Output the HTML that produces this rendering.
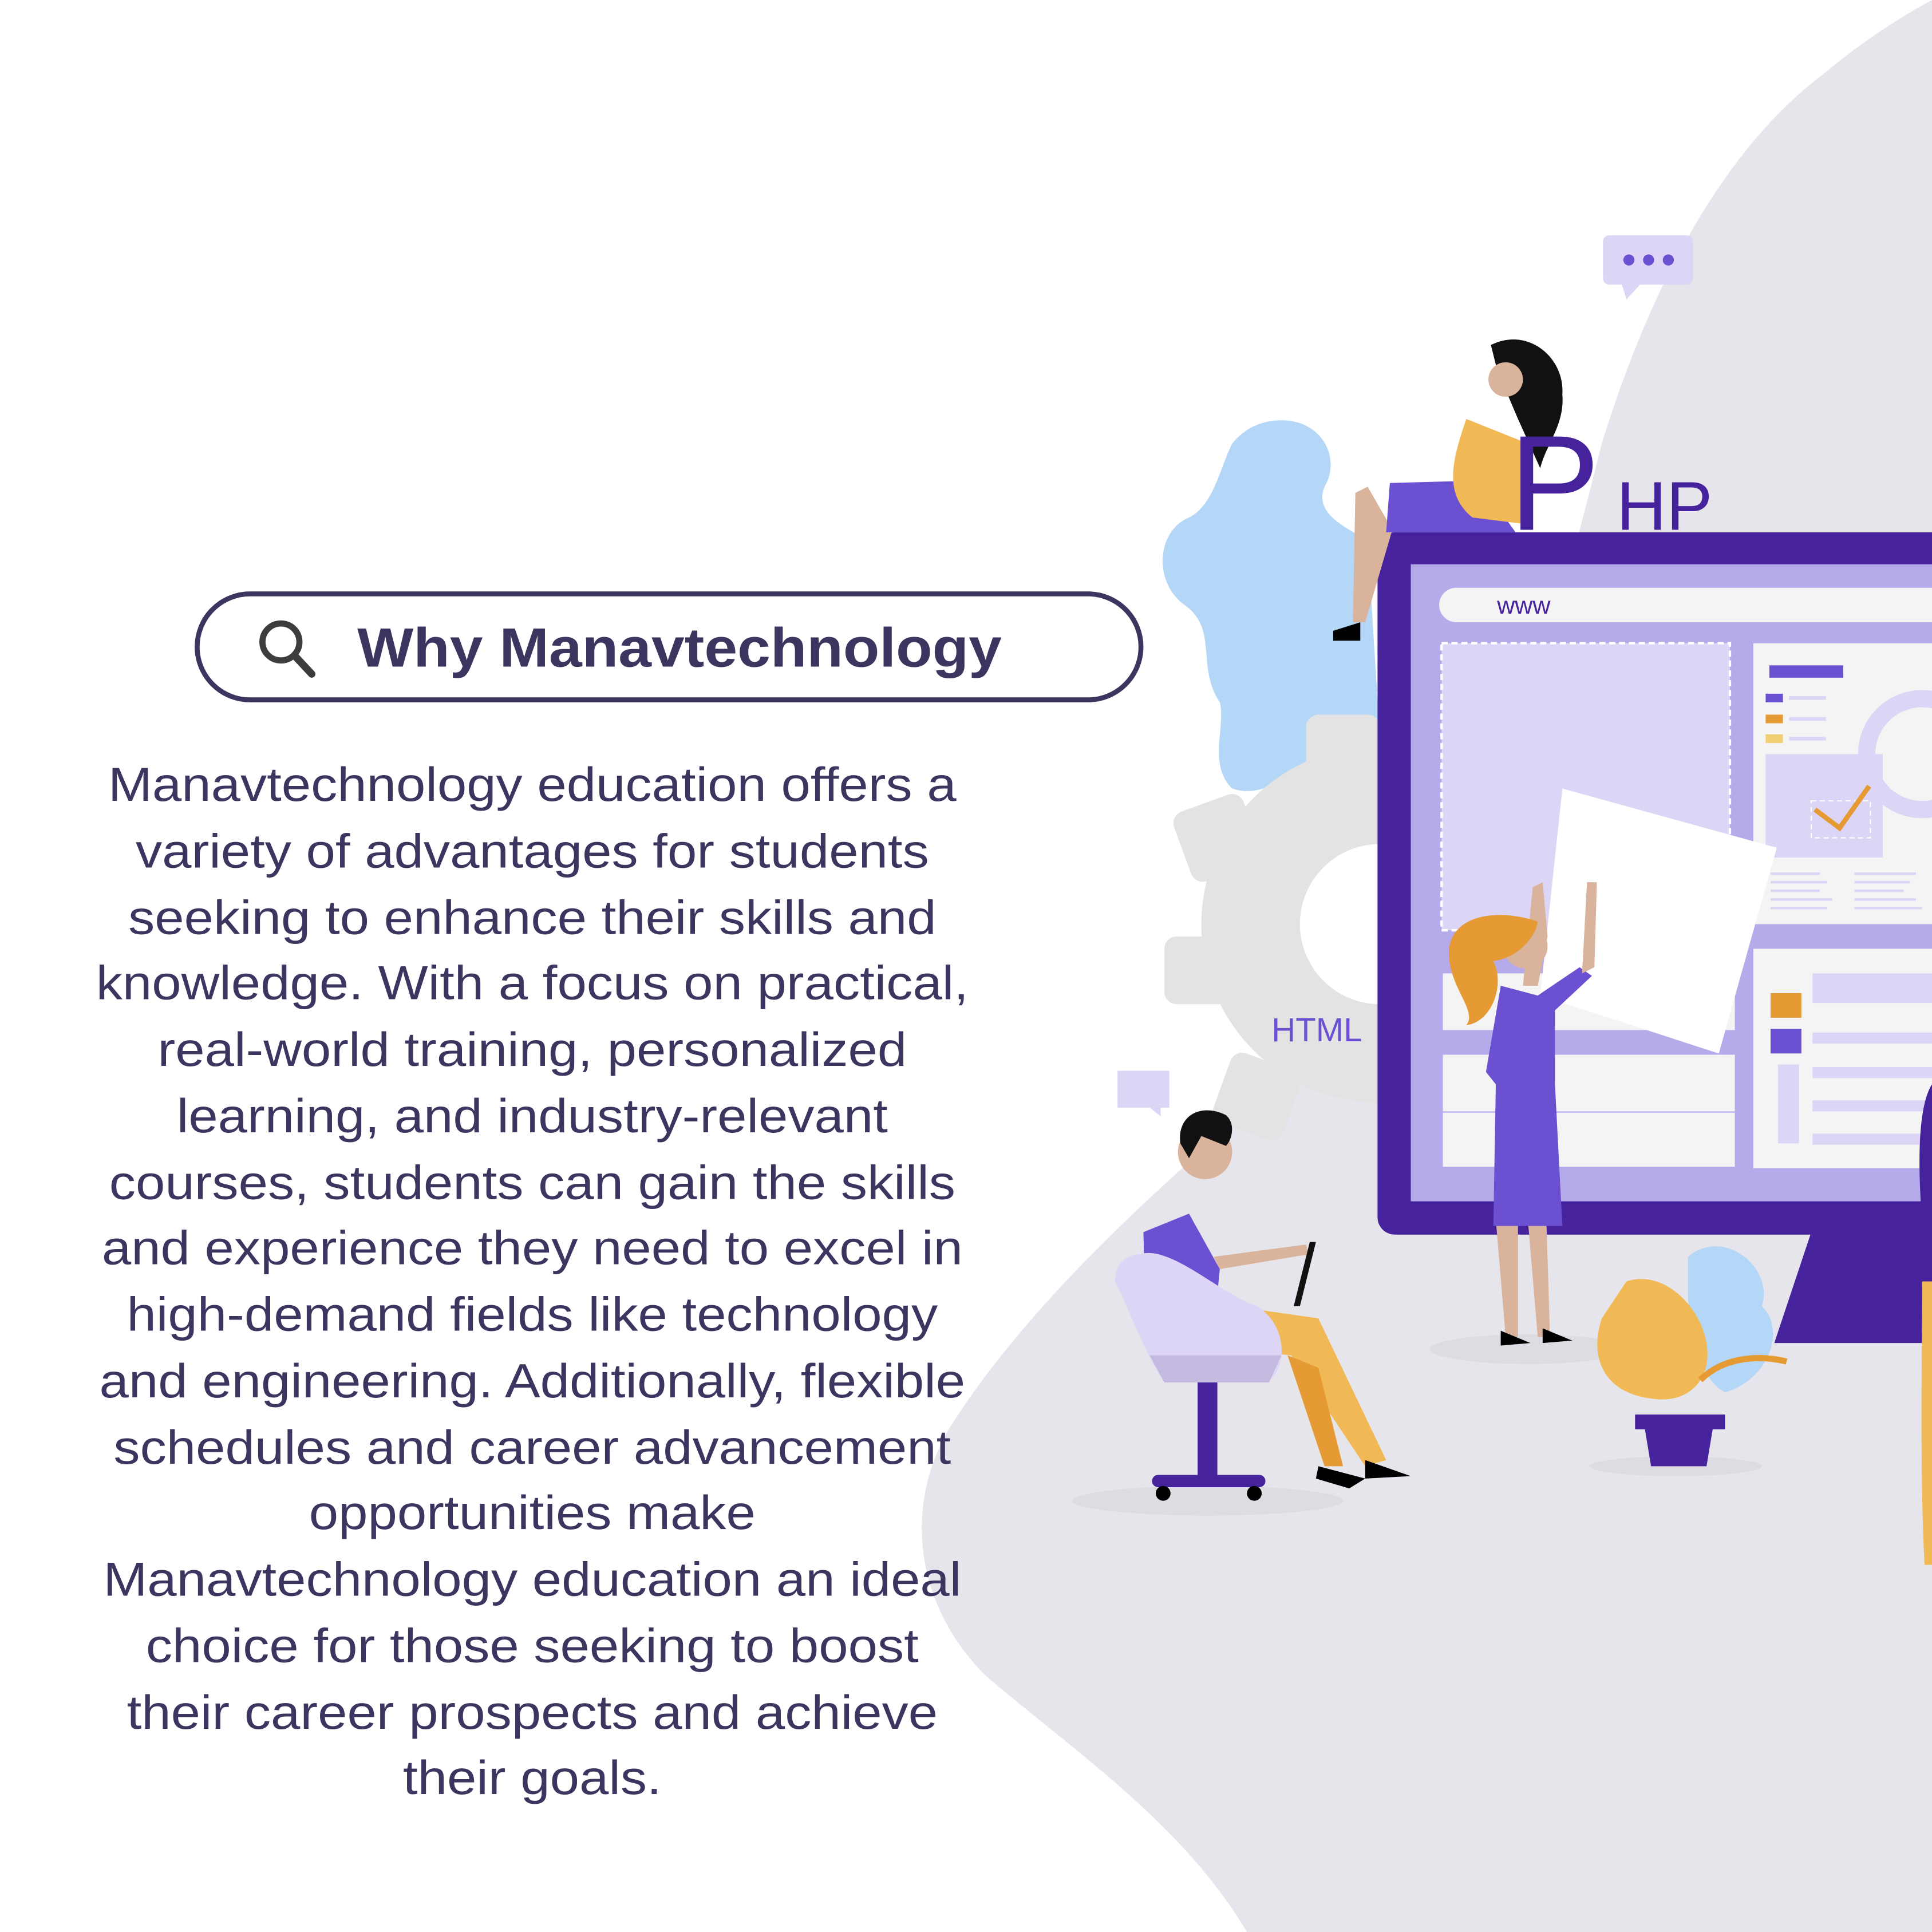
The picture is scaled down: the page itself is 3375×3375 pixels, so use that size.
<!DOCTYPE html>
<html><head><meta charset="utf-8"><style>
html,body{margin:0;padding:0;background:#fff;}
svg{display:block;}
</style></head><body>
<svg width="3375" height="3375" viewBox="0 0 1568 1568" xmlns="http://www.w3.org/2000/svg">
<rect width="1568" height="1568" fill="#fff"/>
<path d="M1568 0 L1568 1568 L1012 1568 C960 1480 870 1420 800 1360 C740 1300 735 1220 770 1160 C820 1080 900 1000 980 930 C1050 870 1100 820 1150 760 C1220 660 1260 520 1300 360 C1340 230 1400 120 1480 60 C1510 35 1540 15 1568 0 Z" fill="#e6e5ec"/>
<path d="M1030 342 C1070 335 1090 370 1075 395 C1065 420 1100 430 1110 440 L1120 600 C1110 610 1095 600 1080 600 C1060 620 1030 650 1000 640 C980 620 995 590 990 570 C970 540 990 510 960 490 C935 470 940 430 965 420 C985 410 990 380 1000 360 C1010 348 1020 344 1030 342 Z" fill="#b4d7f8"/>
<g fill="#e3e3e3">
<circle cx="1120" cy="750" r="145"/>
<rect x="958" y="650" width="60" height="60" rx="10" transform="rotate(-20 988 680)"/>
<rect x="945" y="760" width="60" height="55" rx="10"/>
<rect x="990" y="860" width="60" height="60" rx="10" transform="rotate(20 1020 890)"/>
<rect x="1060" y="580" width="60" height="60" rx="10"/>
</g>
<circle cx="1120" cy="750" r="65" fill="#fff"/>
<text x="1032" y="845" font-family="Liberation Sans, sans-serif" font-size="27" fill="#6b51d1">HTML</text>
<rect x="1301" y="191" width="73" height="40" rx="5" fill="#ddd5f5"/>
<path d="M1316 230 L1320 243 L1332 230 Z" fill="#ddd5f5"/>
<circle cx="1322" cy="211" r="4.5" fill="#6b51d1"/><circle cx="1338" cy="211" r="4.5" fill="#6b51d1"/><circle cx="1354" cy="211" r="4.5" fill="#6b51d1"/>
<rect x="907" y="869" width="42" height="30" fill="#ddd5f5"/>
<path d="M932 898 L942 906 L942 898 Z" fill="#ddd5f5"/>
<path d="M1470 1000 L1568 1000 L1568 1090 L1440 1090 Z" fill="#46239c"/>
<rect x="1118" y="432" width="480" height="570" rx="14" fill="#46239c"/>
<rect x="1145" y="458" width="430" height="517" fill="#b5abea"/>
<rect x="1168" y="477" width="420" height="28" rx="14" fill="#f4f4f4"/>
<text x="1215" y="498" font-family="Liberation Sans, sans-serif" font-size="20" fill="#46239c">www</text>
<rect x="1170" y="522" width="234" height="233" fill="#ddd5f5" stroke="#fff" stroke-width="2" stroke-dasharray="5 3"/>
<rect x="1423" y="522" width="160" height="228" fill="#f4f4f4"/>
<rect x="1436" y="540" width="60" height="10" fill="#6b51d1"/>
<rect x="1433" y="563" width="14" height="7" fill="#6b51d1"/><rect x="1452" y="565" width="30" height="3" fill="#ddd5f5"/>
<rect x="1433" y="580" width="14" height="7" fill="#e59a33"/><rect x="1452" y="582" width="30" height="3" fill="#ddd5f5"/>
<rect x="1433" y="596" width="14" height="7" fill="#f0cf72"/><rect x="1452" y="598" width="30" height="3" fill="#ddd5f5"/>
<rect x="1433" y="612" width="95" height="84" fill="#ddd5f5"/>
<circle cx="1560" cy="612" r="45" fill="none" stroke="#ddd5f5" stroke-width="14"/>
<rect x="1470" y="650" width="48" height="30" fill="none" stroke="#fff" stroke-dasharray="4 3"/>
<path d="M1473 657 L1493 672 L1517 638" fill="none" stroke="#e59a33" stroke-width="4"/>
<g fill="#ddd5f5"><rect x="1437" y="708" width="40" height="2"/><rect x="1437" y="715" width="46" height="2"/><rect x="1437" y="722" width="40" height="2"/><rect x="1437" y="729" width="50" height="2"/><rect x="1437" y="736" width="46" height="2"/>
<rect x="1505" y="708" width="50" height="2"/><rect x="1505" y="715" width="45" height="2"/><rect x="1505" y="722" width="40" height="2"/><rect x="1505" y="729" width="50" height="2"/><rect x="1505" y="736" width="55" height="2"/></g>
<rect x="1423" y="770" width="160" height="178" fill="#f4f4f4"/>
<rect x="1471" y="790" width="100" height="24" fill="#ddd5f5"/>
<rect x="1437" y="806" width="25" height="20" fill="#e59a33"/>
<rect x="1437" y="835" width="25" height="20" fill="#6b51d1"/>
<rect x="1443" y="864" width="17" height="64" fill="#ddd5f5"/>
<rect x="1471" y="838" width="100" height="9" fill="#ddd5f5"/><rect x="1471" y="866" width="100" height="9" fill="#ddd5f5"/><rect x="1471" y="893" width="100" height="9" fill="#ddd5f5"/><rect x="1471" y="920" width="100" height="9" fill="#ddd5f5"/>
<rect x="1171" y="790" width="237" height="46" fill="#f4f4f4"/>
<rect x="1171" y="856" width="237" height="46" fill="#f4f4f4"/>
<rect x="1171" y="903" width="237" height="44" fill="#f4f4f4"/>
<path d="M1268 640 L1442 688 L1395 855 L1250 808 Z" fill="#fff"/>
<ellipse cx="1240" cy="1095" rx="80" ry="12" fill="#dcdce2"/>
<path d="M1214 990 L1222 1085 L1232 1085 L1232 990 Z M1240 990 L1248 1085 L1258 1085 L1255 990Z" fill="#d9b39c"/>
<path d="M1218 1080 L1242 1090 L1218 1092Z M1252 1078 L1276 1088 L1252 1090Z" fill="#000"/>
<path d="M1218 800 L1248 808 L1282 785 L1292 792 L1262 820 L1262 880 L1268 995 L1212 995 L1214 880 L1206 870 Z" fill="#6b51d1"/>
<path d="M1244 720 L1252 716 L1256 760 L1248 800 L1236 800Z M1288 716 L1296 716 L1294 785 L1284 790Z" fill="#d9b39c"/>
<circle cx="1238" cy="768" r="18" fill="#d9b39c"/>
<path d="M1248 748 C1220 738 1180 740 1176 770 C1174 800 1200 820 1190 832 C1210 830 1222 800 1212 780 C1230 778 1246 762 1248 748Z" fill="#e59a33"/>
<path d="M1100 400 L1110 395 L1130 430 L1108 505 L1098 505 Z" fill="#d9b39c"/>
<path d="M1082 512 L1104 505 L1104 520 L1082 520Z" fill="#000"/>
<path d="M1128 392 L1200 390 L1230 432 L1125 432 Z" fill="#6b51d1"/>
<path d="M1190 340 C1180 370 1170 400 1195 420 L1235 425 L1240 360 Z" fill="#f0b955"/>
<path d="M1210 280 C1240 265 1270 290 1268 320 C1270 345 1255 360 1250 380 L1232 340 L1215 300Z" fill="#111"/>
<circle cx="1222" cy="308" r="14" fill="#d9b39c"/>
<text x="1225" y="430" font-family="Liberation Sans, sans-serif" font-size="110" fill="#46239c">P</text>
<text x="1312" y="430" font-family="Liberation Sans, sans-serif" font-size="56" fill="#46239c">HP</text>
<ellipse cx="980" cy="1218" rx="110" ry="12" fill="#dcdce2"/>
<path d="M928 1000 L965 985 L990 1030 L985 1080 L930 1080Z" fill="#6b51d1"/>
<circle cx="978" cy="935" r="22" fill="#d9b39c"/>
<path d="M958 928 C955 905 975 895 995 905 C1003 912 1000 925 995 930 L975 922 L965 940Z" fill="#111"/>
<path d="M985 1020 L1060 1010 L1062 1018 L990 1030Z" fill="#d9b39c"/>
<path d="M1068 1008 L1055 1060 L1050 1060 L1063 1008Z" fill="#111"/>
<path d="M1000 1060 L1070 1070 L1125 1185 L1108 1190 L1048 1100 L1000 1095Z" fill="#f0b955"/>
<path d="M1045 1100 L1075 1190 L1090 1190 L1070 1110Z" fill="#e59a33"/>
<path d="M1070 1190 L1108 1200 L1095 1208 L1068 1200Z M1108 1185 L1145 1198 L1108 1200Z" fill="#000"/>
<path d="M925 1018 C950 1010 990 1050 1020 1060 C1045 1075 1045 1110 1030 1120 L945 1122 C930 1100 915 1060 905 1040 C905 1025 915 1018 925 1018Z" fill="#ddd5f5"/>
<path d="M933 1100 L1040 1100 L1030 1122 L945 1122Z" fill="#c4badf"/>
<rect x="972" y="1122" width="16" height="78" fill="#46239c"/>
<rect x="935" y="1197" width="92" height="10" rx="5" fill="#46239c"/>
<circle cx="944" cy="1212" r="6" fill="#000"/><circle cx="1018" cy="1212" r="6" fill="#000"/>
<ellipse cx="1360" cy="1190" rx="70" ry="8" fill="#dcdce2"/>
<path d="M1370 1020 C1400 995 1440 1030 1430 1060 C1450 1080 1435 1120 1400 1130 C1380 1120 1370 1080 1370 1050Z" fill="#b4d7f8"/>
<path d="M1320 1040 C1350 1030 1380 1060 1385 1090 C1390 1120 1370 1140 1340 1135 C1300 1130 1290 1100 1300 1070Z" fill="#f0b955"/>
<path d="M1380 1120 C1400 1100 1430 1100 1450 1105" fill="none" stroke="#e59a33" stroke-width="5"/>
<path d="M1327 1148 L1400 1148 L1400 1160 L1390 1160 L1385 1190 L1340 1190 L1335 1160 L1327 1160Z" fill="#46239c"/>
<path d="M1568 880 C1555 900 1555 960 1565 1040 L1568 1040Z" fill="#46239c"/>
<path d="M1560 1040 L1568 1040 L1568 1270 L1562 1270 C1558 1200 1560 1100 1560 1040Z" fill="#f0b955"/>
<rect x="160" y="482" width="766" height="86" rx="43" fill="#fff" stroke="#3d3560" stroke-width="4"/>
<circle cx="228" cy="521" r="15" fill="none" stroke="#3d3d3d" stroke-width="5"/>
<line x1="239" y1="532" x2="253" y2="547" stroke="#3d3d3d" stroke-width="6" stroke-linecap="round"/>
<text x="290" y="541" font-family="Liberation Sans, sans-serif" font-weight="bold" font-size="45" fill="#3d3560" textLength="523" lengthAdjust="spacingAndGlyphs">Why Manavtechnology</text>
<g font-family="Liberation Sans, sans-serif" font-size="39" fill="#3d3560" text-anchor="middle" transform="translate(432 0) scale(1.1 1) translate(-432 0)">
<text x="432" y="650">Manavtechnology education offers a</text>
<text x="432" y="704">variety of advantages for students</text>
<text x="432" y="758">seeking to enhance their skills and</text>
<text x="432" y="811">knowledge. With a focus on practical,</text>
<text x="432" y="865">real-world training, personalized</text>
<text x="432" y="919">learning, and industry-relevant</text>
<text x="432" y="973">courses, students can gain the skills</text>
<text x="432" y="1026">and experience they need to excel in</text>
<text x="432" y="1080">high-demand fields like technology</text>
<text x="432" y="1134">and engineering. Additionally, flexible</text>
<text x="432" y="1188">schedules and career advancement</text>
<text x="432" y="1241">opportunities make</text>
<text x="432" y="1295">Manavtechnology education an ideal</text>
<text x="432" y="1349">choice for those seeking to boost</text>
<text x="432" y="1403">their career prospects and achieve</text>
<text x="432" y="1456">their goals.</text>
</g>
</svg>
</body></html>
